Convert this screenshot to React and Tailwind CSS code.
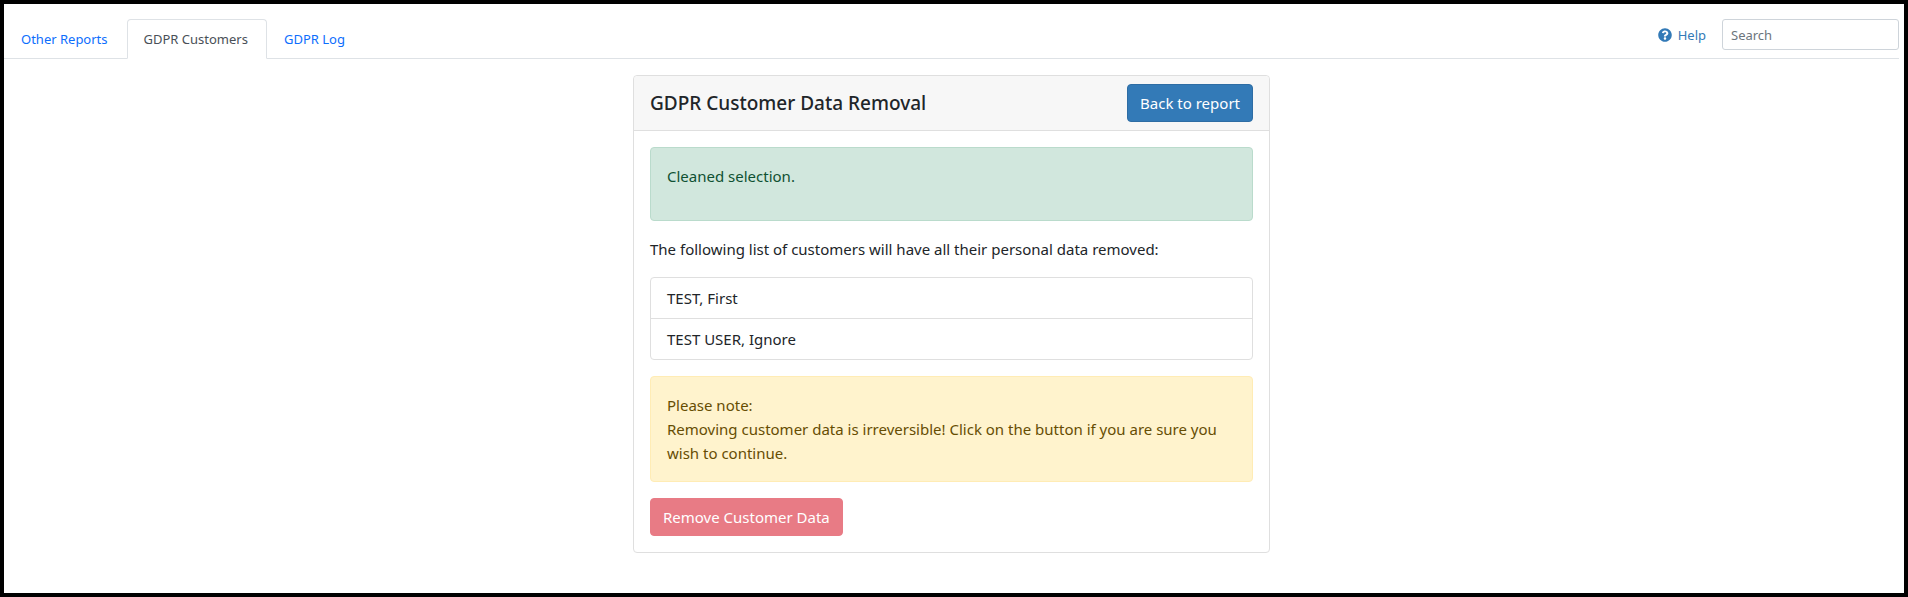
import { useState } from 'react';
import { FaQuestionCircle } from 'react-icons/fa';

const tabs = ["Other Reports", "GDPR Customers", "GDPR Log"]
const customers = ["TEST, First", "TEST USER, Ignore"]

function NavTabs() {
  const [active, setActive] = useState("GDPR Customers")

  const handleTab = (e, tab) => {
    e.preventDefault()
    setActive(tab)
  }

  return (
    <nav className="flex self-end -mb-px">
      {tabs.map((tab) => (
        <a
          key={tab}
          href="#"
          onClick={(e) => handleTab(e, tab)}
          className={
            tab === active
              ? "pl-4 pr-[18px] py-2 rounded-t border border-[#dee2e6] border-b-white bg-white text-[#495057]"
              : "pl-4 pr-[18px] py-2 rounded-t border border-transparent text-[#0d6efd]"
          }
        >
          {tab}
        </a>
      ))}
    </nav>
  )
}

export default function App() {
  const [search, setSearch] = useState("")

  return (
    <div className="min-h-screen border-4 border-black bg-white pt-[15px] pr-[5px] font-['Segoe_UI','Noto_Sans',sans-serif] text-[15px] leading-6 text-[#212529]">
      <header className="flex justify-between border-b border-[#dee2e6] text-[13px] leading-[22px]">
        <NavTabs />
        <div className="flex items-start gap-4">
          <a href="#" className="flex items-center gap-1.5 h-8 text-[#337ab7]">
            <FaQuestionCircle className="w-[14px] h-[14px]" />
            Help
          </a>
          <input
            type="search"
            aria-label="Search"
            placeholder="Search"
            value={search}
            onChange={(e) => setSearch(e.target.value)}
            className="w-[177px] h-[31px] px-2 border border-[#ced4da] rounded-[3px] outline-none placeholder:text-[#6c757d]"
          />
        </div>
      </header>

      <main className="w-full max-w-[637px] mx-auto mt-4 border border-[#dfdfdf] rounded">
        <div className="flex items-center justify-between px-4 py-2 bg-[#f7f7f7] border-b border-[#dfdfdf] rounded-t">
          <h1 className="text-[19px] font-medium">GDPR Customer Data Removal</h1>
          <button className="h-[38px] px-3 rounded border border-[#2e6da4] bg-[#337ab7] text-white">
            Back to report
          </button>
        </div>
        <div className="p-4">
          <div className="mb-4 p-4 border border-[#badbcc] rounded bg-[#d1e7dd] text-[#0f5132]">
            <p className="mb-4">Cleaned selection.</p>
          </div>
          <p className="mb-4">The following list of customers will have all their personal data removed:</p>
          <ul className="mb-4 border border-[#dfdfdf] rounded divide-y divide-[#dfdfdf]">
            {customers.map((customer) => (
              <li key={customer} className="px-4 py-2">{customer}</li>
            ))}
          </ul>
          <div className="mb-4 p-4 border border-[#ffecb5] rounded bg-[#fff3cd] text-[#664d03]">
            Please note:<br />
            Removing customer data is irreversible! Click on the button if you are sure you wish to continue.
          </div>
          <button className="block h-[38px] px-3 rounded border border-[#dc3545] bg-[#dc3545] text-white opacity-65">
            Remove Customer Data
          </button>
        </div>
      </main>
    </div>
  );
}
